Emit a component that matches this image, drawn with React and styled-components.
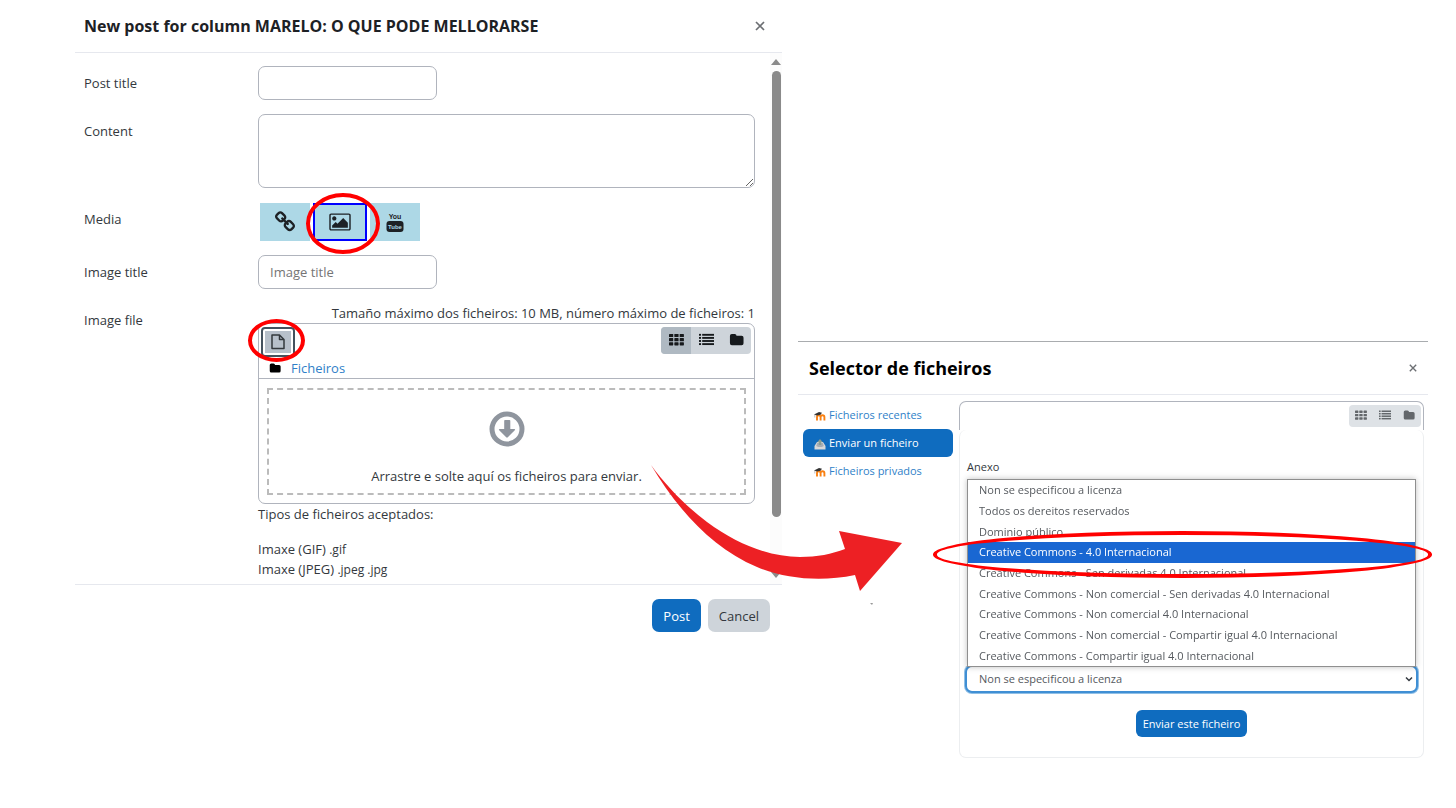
import React, {useState} from "react"
import styled, {createGlobalStyle, css} from "styled-components"

const licenses = [
    "Non se especificou a licenza",
    "Todos os dereitos reservados",
    "Dominio público",
    "Creative Commons - 4.0 Internacional",
    "Creative Commons - Sen derivadas 4.0 Internacional",
    "Creative Commons - Non comercial - Sen derivadas 4.0 Internacional",
    "Creative Commons - Non comercial 4.0 Internacional",
    "Creative Commons - Non comercial - Compartir igual 4.0 Internacional",
    "Creative Commons - Compartir igual 4.0 Internacional",
]

const repositories = [
    { id: "recent", name: "Ficheiros recentes", icon: "moodle" },
    { id: "upload", name: "Enviar un ficheiro", icon: "upload" },
    { id: "private", name: "Ficheiros privados", icon: "moodle" },
]

/* icons */

const LinkIcon = () => (
    <svg width="22" height="22" viewBox="0 0 1792 1792" fill="currentColor" aria-hidden="true">
        <path d="M1520 1216q0-40-28-68l-208-208q-28-28-68-28-42 0-72 32 3 3 19 18.500t21.500 21.500 15 19 13 25.500 3.500 27.500q0 40-28 68t-68 28q-15 0-27.500-3.500t-25.500-13-19-15-21.500-21.500-18.500-19q-33 31-33 73 0 40 28 68l206 207q27 27 68 27 40 0 68-26l147-146q28-28 28-67zm-703-705q0-40-28-68l-206-207q-28-28-68-28-39 0-68 27l-147 146q-28 28-28 67 0 40 28 68l208 208q27 27 68 27 42 0 72-31-3-3-19-18.500t-21.500-21.500-15-19-13-25.500-3.500-27.500q0-40 28-68t68-28q15 0 27.500 3.500t25.500 13 19 15 21.500 21.500 18.500 19q33-31 33-73zm895 705q0 120-85 203l-147 146q-83 83-203 83-121 0-204-85l-206-207q-83-83-83-203 0-123 88-209l-88-88q-86 88-208 88-120 0-204-84l-208-208q-84-84-84-204t85-203l147-146q83-83 203-83 121 0 204 85l206 207q83 83 83 203 0 123-88 209l88 88q86-88 208-88 120 0 204 84l208 208q84 84 84 204z" />
    </svg>
)

const PictureIcon = () => (
    <svg width="22" height="20" viewBox="0 0 1920 1792" fill="currentColor" aria-hidden="true">
        <path d="M640 576q0 80-56 136t-136 56-136-56-56-136 56-136 136-56 136 56 56 136zm1024 384v448h-1408v-192l320-320 160 160 512-512zm96-704h-1600q-13 0-22.500 9.500t-9.500 22.500v1216q0 13 9.500 22.500t22.500 9.500h1600q13 0 22.500-9.500t9.500-22.500v-1216q0-13-9.500-22.500t-22.500-9.500zm160 32v1216q0 66-47 113t-113 47h-1600q-66 0-113-47t-47-113v-1216q0-66 47-113t113-47h1600q66 0 113 47t47 113z" />
    </svg>
)

const YoutubeIcon = () => (
    <svg width="18" height="22" viewBox="0 0 18 22" fill="currentColor" aria-hidden="true">
        <text x="9" y="8" textAnchor="middle" fontFamily="Liberation Sans, sans-serif" fontWeight="700" fontSize="7">You</text>
        <rect x="0.500" y="10" width="17" height="11" rx="3" />
        <text x="9" y="18" textAnchor="middle" fill="#add8e6" fontFamily="Liberation Sans, sans-serif" fontWeight="700" fontSize="6">Tube</text>
    </svg>
)

const FileIcon = () => (
    <svg width="14" height="16" viewBox="0 0 14 16" fill="none" stroke="currentColor" strokeWidth="1.5" strokeLinejoin="round" aria-hidden="true">
        <path d="M1 1h7.500l4.500 4.500v9h-12zM8.500 1v4.500h4.500" />
    </svg>
)

const GridIcon = ({ size }) => (
    <svg width={size} height={size} viewBox="0 0 16 16" fill="currentColor" aria-hidden="true">
        {[2, 6.500, 11].map(y => [0, 5.700, 11.400].map(x => (
            <rect key={x + "-" + y} x={x} y={y} width="4.500" height="3.300" rx="0.600" />
        )))}
    </svg>
)

const ListIcon = ({ size }) => (
    <svg width={size} height={size} viewBox="0 0 16 16" fill="currentColor" aria-hidden="true">
        {[2, 5.300, 8.600, 11.900].map(y => (
            <g key={y}>
                <rect x="0" y={y} width="2.200" height="2" />
                <rect x="3.400" y={y} width="12.600" height="2" />
            </g>
        ))}
    </svg>
)

const FolderIcon = ({ size }) => (
    <svg width={size} height={size} viewBox="0 0 16 16" fill="currentColor" aria-hidden="true">
        <path d="M1 4q0-2 2-2h3q2 0 2 2h5.500q2 0 2 2v6q0 2-2 2h-10.500q-2 0-2-2z" />
    </svg>
)

const DownIcon = () => (
    <svg width="36" height="36" viewBox="0 0 36 36" fill="currentColor" aria-hidden="true">
        <circle cx="18" cy="18" r="15" fill="none" stroke="currentColor" strokeWidth="5" />
        <path d="M15.500 9h5q.8 0 .8.8v8.200h4q1.400.2.500 1.300l-7 7q-.8.700-1.600 0l-7-7q-.9-1.100.5-1.300h4.500v-8.200q0-.8.8-.8z" />
    </svg>
)

const CloseIcon = ({ size }) => (
    <svg width={size} height={size} viewBox="0 0 10 10" fill="none" stroke="currentColor" strokeWidth="1.700" aria-hidden="true">
        <path d="M1 1l8 8M9 1l-8 8" />
    </svg>
)

const MoodleIcon = () => (
    <svg width="12" height="12" viewBox="0 0 12 12" fill="none" aria-hidden="true">
        <path d="M3 10.500v-3.500q0-1.700 1.800-1.700t1.800 1.700v3.500M6.600 7q0-1.700 1.900-1.700t1.900 1.700v3.500" stroke="#f98012" strokeWidth="1.900" />
        <path d="M0 4.500l5-2.500 3 .8-1.500 2-3.500.7z" fill="#333" />
        <path d="M.8 4.500v3" stroke="#999" strokeWidth="0.600" />
    </svg>
)

const UploadIcon = () => (
    <svg width="12" height="12" viewBox="0 0 12 12" aria-hidden="true">
        <path d="M3 4h6l2.500 4v3.500h-11v-3.500z" fill="#d8d8d8" />
        <path d="M2.200 8l1-3h5.600l1 3-2 1h-3.600z" fill="#a6adb5" />
        <path d="M6 1l2.800 3.200h-1.600v2.800h-2.400v-2.800h-1.600z" fill="#8a9d93" />
    </svg>
)

const ArrowDrawing = () => (
    <Arrow width="252" height="142" viewBox="0 0 252 142" aria-hidden="true">
        <path fill="#ed2024" d="M0 0C16 22 36 42 56 57C86 79 118 92 149 92C166 92 181 89 194 84L188 66L251 78L209 126L204 110C170 117 135 114 106 102C60 83 25 42 0 0z" />
        <path fill="#999" d="M219 138h3l-1 2z" />
    </Arrow>
)

const PostDialog = () => {
    const [media, setMedia] = useState("image")
    return (
        <PostWindow>
            <PostHeader>
                <PostTitle>New post for column MARELO: O QUE PODE MELLORARSE</PostTitle>
                <CloseButton aria-label="Close"><CloseIcon size={10} /></CloseButton>
            </PostHeader>
            <PostBody>
                <PostForm>
                    <FieldLabel htmlFor="post-title">Post title</FieldLabel>
                    <TextInput id="post-title" />

                    <FieldLabel htmlFor="post-content">Content</FieldLabel>
                    <TextArea id="post-content" />

                    <FieldLabel as="span">Media</FieldLabel>
                    <MediaGroup>
                        <MediaButton aria-label="Link" onClick={() => setMedia("link")} $active={media === "link"}>
                            <LinkIcon />
                        </MediaButton>
                        <Marked>
                            <MediaButton aria-label="Image" onClick={() => setMedia("image")} $active={media === "image"}>
                                <PictureIcon />
                            </MediaButton>
                            <MediaRing />
                        </Marked>
                        <MediaButton aria-label="Video" onClick={() => setMedia("video")} $active={media === "video"}>
                            <YoutubeIcon />
                        </MediaButton>
                    </MediaGroup>

                    <FieldLabel htmlFor="image-title">Image title</FieldLabel>
                    <TextInput id="image-title" placeholder="Image title" />

                    <FieldLabel as="span">Image file</FieldLabel>
                    <div>
                        <Restrictions>Tamaño máximo dos ficheiros: 10 MB, número máximo de ficheiros: 1</Restrictions>
                        <FileManager>
                            <FileToolbar>
                                <Marked>
                                    <AddButton aria-label="Add file"><span><FileIcon /></span></AddButton>
                                    <FileRing />
                                </Marked>
                                <ViewGroup>
                                    <ViewButton aria-label="Icons" $active><GridIcon size={15} /></ViewButton>
                                    <ViewButton aria-label="List"><ListIcon size={15} /></ViewButton>
                                    <ViewButton aria-label="Tree"><FolderIcon size={15} /></ViewButton>
                                </ViewGroup>
                            </FileToolbar>
                            <PathBar>
                                <FolderIcon size={12} />
                                <a href="#ficheiros">Ficheiros</a>
                            </PathBar>
                            <DropZone>
                                <DownIcon />
                                <span>Arrastre e solte aquí os ficheiros para enviar.</span>
                            </DropZone>
                        </FileManager>
                        <TypesTitle>Tipos de ficheiros aceptados:</TypesTitle>
                        <TypesList>
                            <li>Imaxe (GIF) <small>.gif</small></li>
                            <li>Imaxe (JPEG) <small>.jpeg .jpg</small></li>
                        </TypesList>
                    </div>
                </PostForm>
                <ScrollTrack>
                    <ScrollArrow />
                    <ScrollThumb />
                    <ScrollArrow $down />
                </ScrollTrack>
            </PostBody>
            <PostFooter>
                <DialogButton $primary>Post</DialogButton>
                <DialogButton>Cancel</DialogButton>
            </PostFooter>
        </PostWindow>
    )
}

const FilePicker = () => {
    const [repo, setRepo] = useState("upload")
    const [license, setLicense] = useState(licenses[0])
    return (
        <PickerWindow>
            <PickerHeader>
                <PickerTitle>Selector de ficheiros</PickerTitle>
                <CloseButton aria-label="Pechar"><CloseIcon size={8} /></CloseButton>
            </PickerHeader>
            <PickerBody>
                <RepoNav>
                    {repositories.map(item => (
                        <RepoLink key={item.id} href={"#" + item.id} $active={repo === item.id} onClick={() => setRepo(item.id)}>
                            {item.icon === "moodle" ? <MoodleIcon /> : <UploadIcon />}
                            {item.name}
                        </RepoLink>
                    ))}
                </RepoNav>
                <PickerPanel>
                    <PickerToolbar>
                        <ViewGroup $small>
                            <ViewButton aria-label="Iconas" $small><GridIcon size={12} /></ViewButton>
                            <ViewButton aria-label="Lista" $small><ListIcon size={12} /></ViewButton>
                            <ViewButton aria-label="Árbore" $small><FolderIcon size={12} /></ViewButton>
                        </ViewGroup>
                    </PickerToolbar>
                    <UploadForm>
                        <label htmlFor="attachment">Anexo</label>
                        <HiddenFields>
                            <input id="attachment" type="file" tabIndex={-1} />
                        </HiddenFields>
                        <LicenseBox>
                            <LicenseList role="listbox" aria-label="Licenza">
                                {licenses.map((name, i) => (
                                    <LicenseOption key={name} role="option" aria-selected={i === 3} $active={i === 3} onClick={() => setLicense(name)}>
                                        {name}
                                        {i === 3 && <LicenseRing />}
                                    </LicenseOption>
                                ))}
                            </LicenseList>
                            <LicenseSelect aria-label="Licenza" value={license} onChange={e => setLicense(e.target.value)}>
                                {licenses.map(name => <option key={name}>{name}</option>)}
                            </LicenseSelect>
                            <Chevron viewBox="0 0 8 8" aria-hidden="true"><path d="M1 2.500l3 3 3-3" /></Chevron>
                        </LicenseBox>
                        <SendButton>Enviar este ficheiro</SendButton>
                    </UploadForm>
                </PickerPanel>
            </PickerBody>
        </PickerWindow>
    )
}

const App = () => (
    <>
        <GlobalStyle />
        <Page>
            <PostDialog />
            <FilePicker />
            <ArrowDrawing />
        </Page>
    </>
)

const GlobalStyle = createGlobalStyle`
    * {
        box-sizing: border-box;
    }
    body {
        margin: 0;
        background: #fff;
        color: #33383d;
        font-family: "Open Sans", "Noto Sans", sans-serif;
        font-size: 13px;
        line-height: 20px;
    }
    button, input, select, textarea {
        font: inherit;
        color: inherit;
        margin: 0;
    }
    a {
        color: #2f7fc8;
        text-decoration: none;
    }
    svg {
        display: block;
        flex: none;
    }
`

const Page = styled.main`
    position: relative;
    display: grid;
    grid-template-columns: 707fr 630fr;
    column-gap: 16px;
    align-items: start;
    padding: 0 28px 0 75px;
`

const Arrow = styled.svg`
    position: absolute;
    left: 651px;
    top: 465px;
`

const ring = css`
    position: absolute;
    border: 4px solid #f00;
    border-radius: 50%;
    pointer-events: none;
`

const Marked = styled.div`
    position: relative;
    display: flex;
`

const MediaRing = styled.span`
    ${ring}
    inset: -10px -13px -13px -7px;
`

const FileRing = styled.span`
    ${ring}
    inset: -8px -10px -5px -13px;
`

const LicenseRing = styled.span`
    ${ring}
    inset: -11px -17px -15px -35px;
`

const CloseButton = styled.button`
    display: flex;
    padding: 4px;
    border: none;
    background: none;
    color: #6c6f73;
    cursor: pointer;
`

/* post dialog */

const PostWindow = styled.section`
    min-width: 0;
`

const PostHeader = styled.header`
    display: flex;
    align-items: center;
    justify-content: space-between;
    height: 53px;
    padding: 0 13px 0 9px;
    border-bottom: 1px solid #e6e8ee;
`

const PostTitle = styled.h1`
    margin: 0;
    color: #1d2125;
    font-size: 16px;
    font-weight: 700;
    line-height: 24px;
`

const PostBody = styled.div`
    display: flex;
    height: 531px;
    overflow: hidden;
`

const PostForm = styled.form`
    flex: 1;
    display: grid;
    grid-template-columns: 174px 1fr;
    row-gap: 14px;
    align-content: start;
    align-items: start;
    padding: 13px 15px 0 9px;
`

const FieldLabel = styled.label`
    padding: 7px 0;
`

const TextInput = styled.input`
    width: 179px;
    height: 34px;
    padding: 0 11px;
    border: 1px solid #b0b4bd;
    border-radius: 7px;
    outline: none;
    ::placeholder {
        color: #6f777f;
    }
`

const TextArea = styled.textarea`
    display: block;
    width: 100%;
    height: 74px;
    border: 1px solid #b0b4bd;
    border-radius: 7px;
    outline: none;
`

const MediaGroup = styled.div`
    display: flex;
    gap: 3px;
    padding: 1px 2px 0;
`

const MediaButton = styled.button.attrs({ type: "button" })`
    display: flex;
    align-items: center;
    justify-content: center;
    width: ${props => props.$active ? "54px" : "50px"};
    height: 38px;
    padding: 0;
    border: ${props => props.$active ? "2px solid #00f" : "none"};
    background: #add8e6;
    color: #1d2125;
    cursor: pointer;
`

const Restrictions = styled.p`
    margin: 0;
    text-align: right;
    white-space: nowrap;
`

const FileManager = styled.div`
    border: 1px solid #b0b4bd;
    border-radius: 7px;
`

const FileToolbar = styled.div`
    display: flex;
    align-items: flex-start;
    justify-content: space-between;
    padding: 3px 3px 0 2px;
`

const AddButton = styled.button.attrs({ type: "button" })`
    width: 34px;
    height: 30px;
    padding: 2px;
    border: 2px solid #44525e;
    border-radius: 4px;
    background: #fff;
    span {
        display: flex;
        align-items: center;
        justify-content: center;
        height: 22px;
        background: #b7c0ca;
    }
`

const ViewGroup = styled.div`
    display: flex;
    overflow: hidden;
    border-radius: 4px;
    background: ${props => props.$small ? "#dee2e6" : "#ced4da"};
`

const ViewButton = styled.button.attrs({ type: "button" })`
    display: flex;
    align-items: center;
    justify-content: center;
    width: ${props => props.$small ? "24px" : "30px"};
    height: ${props => props.$small ? "22px" : "27px"};
    padding: 0 0 2px;
    border: none;
    background: ${props => props.$active ? "#afb9c2" : "transparent"};
    color: ${props => props.$small ? "#63676b" : "#16191c"};
`

const PathBar = styled.div`
    display: flex;
    align-items: center;
    gap: 10px;
    height: 22px;
    padding: 0 10px;
    border-bottom: 1px solid #b0b4bd;
    color: #000;
`

const DropZone = styled.div`
    display: flex;
    flex-direction: column;
    align-items: center;
    gap: 19px;
    height: 107px;
    margin: 9px 8px 8px;
    padding-top: 21px;
    border: 2px dashed #bbb;
    svg {
        color: #8f959e;
    }
`

const TypesTitle = styled.p`
    margin: 0 0 15px;
`

const TypesList = styled.ul`
    margin: 0;
    padding: 0;
    list-style: none;
    small {
        font-size: 12px;
        line-height: 12px;
    }
`

const ScrollTrack = styled.div`
    display: flex;
    flex-direction: column;
    align-items: center;
    width: 12px;
    padding: 6px 0;
    background: #fcfcfc;
`

const ScrollArrow = styled.span`
    width: 0;
    height: 0;
    margin: ${props => props.$down ? "auto 0 0" : "0 0 6px"};
    border: 5px solid transparent;
    border-top: ${props => props.$down ? "6px solid #8a8a8a" : "none"};
    border-bottom: ${props => props.$down ? "none" : "6px solid #8a8a8a"};
`

const ScrollThumb = styled.span`
    width: 9px;
    height: 446px;
    border-radius: 5px;
    background: #8a8a8a;
`

const PostFooter = styled.footer`
    display: flex;
    justify-content: flex-end;
    gap: 7px;
    padding: 14px 12px;
    border-top: 1px solid #e6e8ee;
`

const DialogButton = styled.button`
    height: 33px;
    padding: 0 11px;
    border: none;
    border-radius: 7px;
    background: ${props => props.$primary ? "#0f6cbf" : "#ced4da"};
    color: ${props => props.$primary ? "#fff" : "#33383d"};
    cursor: pointer;
`

/* file picker */

const PickerWindow = styled.section`
    min-width: 0;
    margin-top: 341px;
    border-top: 1px solid #a9acaf;
    font-size: 11px;
    line-height: 16px;
`

const PickerHeader = styled.header`
    display: flex;
    align-items: center;
    justify-content: space-between;
    height: 53px;
    padding: 0 7px 0 11px;
    border-bottom: 1px solid #e6e8ee;
`

const PickerTitle = styled.h2`
    margin: 0;
    color: #000;
    font-size: 18px;
    font-weight: 700;
    line-height: 26px;
`

const PickerBody = styled.div`
    display: flex;
    gap: 6px;
    padding: 6px 4px 0 5px;
`

const RepoNav = styled.nav`
    width: 150px;
`

const RepoLink = styled.a`
    display: flex;
    align-items: center;
    gap: 3px;
    height: 28px;
    padding: 0 11px;
    border-radius: 6px;
    background: ${props => props.$active ? "#0f6cbf" : "transparent"};
    color: ${props => props.$active ? "#fff" : "#2f7fc8"};
    svg {
        margin-top: 2px;
    }
`

const PickerPanel = styled.div`
    flex: 1;
`

const PickerToolbar = styled.div`
    display: flex;
    justify-content: flex-end;
    height: 29px;
    padding: 3px 2px;
    border: 1px solid #b0b4bd;
    border-bottom: none;
    border-radius: 7px 7px 0 0;
`

const UploadForm = styled.div`
    padding: 29px 5px 20px;
    border: 1px solid #eceef0;
    border-top: none;
    border-radius: 7px;
    label {
        padding-left: 2px;
    }
`

const HiddenFields = styled.div`
    height: 190px;
    padding: 10px 2px;
    input {
        opacity: 0;
    }
`

const LicenseBox = styled.div`
    position: relative;
`

const LicenseList = styled.ul`
    position: absolute;
    z-index: 1;
    left: 2px;
    right: 2px;
    bottom: 26px;
    display: grid;
    height: 188px;
    margin: 0;
    padding: 0;
    border: 1px solid #8f8f8f;
    background: #fff;
    box-shadow: 0 0 6px rgba(0,0,0,0.25);
    list-style: none;
`

const LicenseOption = styled.li`
    position: relative;
    display: flex;
    align-items: center;
    padding: 0 11px;
    background: ${props => props.$active ? "#1967d2" : "transparent"};
    color: ${props => props.$active ? "#fff" : "#55595e"};
    z-index: ${props => props.$active ? 1 : 0};
    cursor: default;
`

const LicenseSelect = styled.select`
    display: block;
    appearance: none;
    width: 100%;
    height: 28px;
    padding: 0 12px;
    border: 2px solid #408fd4;
    border-radius: 7px;
    background: #fff;
    color: #55595e;
    outline: none;
    box-shadow: 0 0 0 1px #8fbfe6;
`

const Chevron = styled.svg`
    position: absolute;
    right: 5px;
    top: 10px;
    width: 8px;
    height: 8px;
    fill: none;
    stroke: #343a40;
    stroke-width: 1.500;
    pointer-events: none;
`

const SendButton = styled.button`
    display: block;
    height: 27px;
    margin: 17px auto 0;
    padding: 0 7px;
    border: none;
    border-radius: 6px;
    background: #0f6cbf;
    color: #fff;
    cursor: pointer;
`

export default App
